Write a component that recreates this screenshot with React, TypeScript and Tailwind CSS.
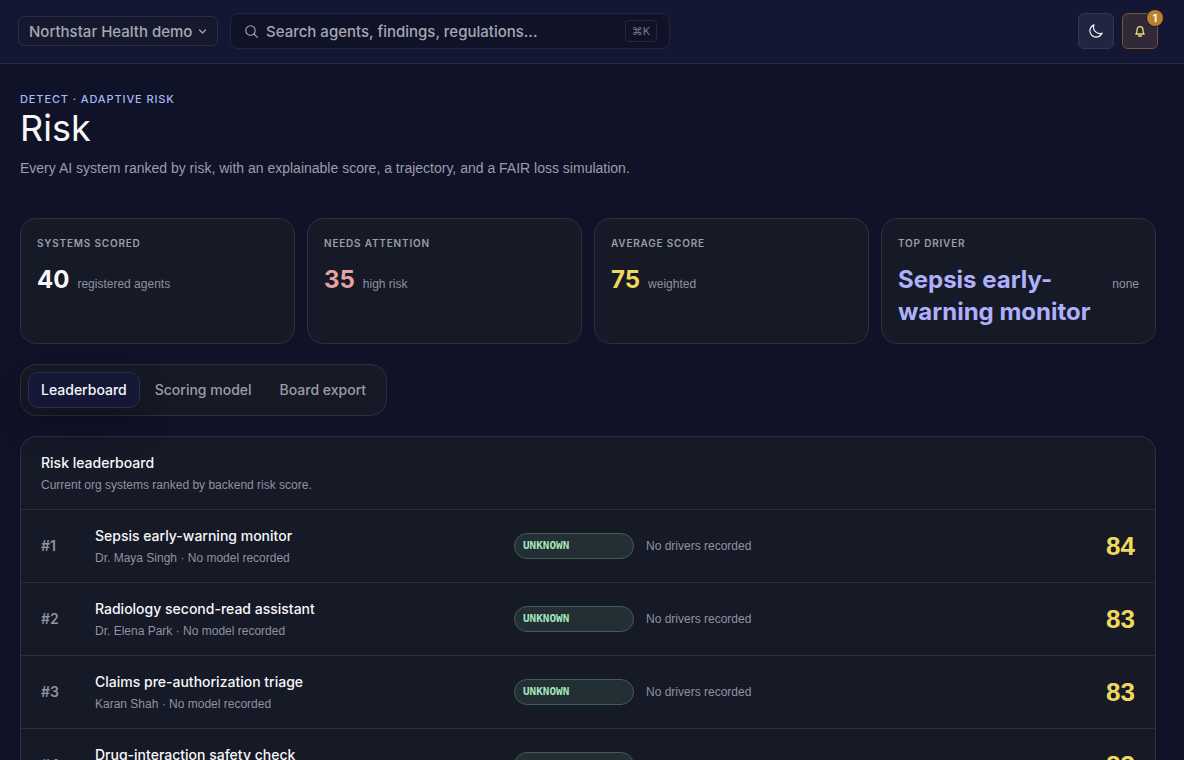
import React, { useState } from 'react';

const stats = [
  { label: 'Systems scored', value: '40', note: 'registered agents', color: 'text-[#f7f7fa]' },
  { label: 'Needs attention', value: '35', note: 'high risk', color: 'text-[#e5a3a3]' },
  { label: 'Average score', value: '75', note: 'weighted', color: 'text-[#efd95b]' },
  { label: 'Top driver', value: 'Sepsis early-warning monitor', note: 'none', color: 'text-[#aeb0fb]' },
];

const tabs = ['Leaderboard', 'Scoring model', 'Board export'];

const systems = [
  { name: 'Sepsis early-warning monitor', owner: 'Dr. Maya Singh', score: 84 },
  { name: 'Radiology second-read assistant', owner: 'Dr. Elena Park', score: 83 },
  { name: 'Claims pre-authorization triage', owner: 'Karan Shah', score: 83 },
  { name: 'Drug-interaction safety check', owner: 'Dr. Maya Singh', score: 83 },
];

const Header: React.FC = () => (
  <header className="flex items-center gap-3 border-b border-[#292c46] bg-[#141733] pt-[13px] pr-[26px] pb-[14px] pl-[18px]">
    <div className="relative shrink-0">
      <select
        aria-label="Organization"
        className="h-[30px] appearance-none rounded-md border border-[#2a2d43] bg-[#16192e] pt-0.5 pr-6 pl-2.5 text-[15px] font-medium text-[#a6a7b1]"
      >
        <option>Northstar Health demo</option>
      </select>
      <svg className="pointer-events-none absolute top-[11px] right-[11px]" width="9" height="9" viewBox="0 0 9 9" fill="none" stroke="#a6a7b1" strokeWidth="1.2" strokeLinecap="round" strokeLinejoin="round">
        <path d="M1.5 3l3 3 3-3" />
      </svg>
    </div>

    <label className="flex h-9 w-[440px] items-center gap-2 rounded-lg border border-[#23263d] bg-[#101228] pr-3 pl-3.5">
      <svg className="shrink-0" width="13" height="13" viewBox="0 0 13 13" fill="none" stroke="#a6a7b1" strokeWidth="1.1" strokeLinecap="round">
        <circle cx="5.5" cy="5.5" r="4.7" />
        <path d="M9 9l3.4 3.4" />
      </svg>
      <input
        type="search"
        aria-label="Search"
        placeholder="Search agents, findings, regulations..."
        className="min-w-0 flex-1 bg-transparent pt-0.5 text-[15px] font-medium text-white outline-none placeholder:text-[#a6a7b1]"
      />
      <kbd className="flex h-[22px] w-8 items-center justify-center rounded border border-[#26293e] font-['Inter','DejaVu_Sans',sans-serif] text-[11px] text-[#777987]">
        ⌘K
      </kbd>
    </label>

    <div className="ml-auto flex gap-2">
      <button aria-label="Toggle theme" className="flex size-9 items-center justify-center rounded-md border border-[#33364f] bg-[#222541]">
        <svg width="14" height="14" viewBox="0 0 14 14" fill="none" stroke="#f0f0f5" strokeWidth="1.2" strokeLinejoin="round">
          <path d="M5 .9a6.3 6.3 0 1 0 8.1 8.1A6.2 6.2 0 0 1 5 .9z" />
        </svg>
      </button>
      <button aria-label="Notifications" className="relative flex size-9 items-center justify-center rounded-md border border-[#7b5530] bg-[#302a38]">
        <svg width="10" height="12" viewBox="0 0 10 12" fill="none" stroke="#f0df80" strokeWidth="1.3" strokeLinejoin="round" strokeLinecap="round">
          <path d="M.9 9c.9-1 1.2-2.1 1.2-4.5a2.9 2.9 0 0 1 5.8 0c0 2.4.3 3.5 1.2 4.5z" />
          <path d="M3.6 11h2.8" />
        </svg>
        <span className="absolute -top-1 -right-1.5 flex size-4 items-center justify-center rounded-full bg-[#bd7f2c] text-[10px] font-bold text-white ring-1 ring-[#141733]">
          1
        </span>
      </button>
    </div>
  </header>
);

const StatCard: React.FC<(typeof stats)[number]> = ({ label, value, note, color }) => (
  <div className="rounded-2xl border border-[#2c2f3c] bg-[#161926] px-4 pt-4 pb-[15px]">
    <p className="text-[10px] leading-4 font-semibold tracking-[0.08em] text-[#9c9da7] uppercase">{label}</p>
    <div className="mt-[13px] flex items-baseline gap-2">
      <span className={`text-2xl leading-8 font-bold ${color}`}>{value}</span>
      <span className="font-['Liberation_Sans',sans-serif] text-xs text-[#9192a0]">{note}</span>
    </div>
  </div>
);

export default function App() {
  const [activeTab, setActiveTab] = useState('Leaderboard');

  return (
    <div className="min-h-screen bg-[#101228] font-['Inter','Liberation_Sans',sans-serif] text-[#f7f7fa]">
      <Header />

      <main className="pt-[27px] pr-7 pb-8 pl-5">
        <p className="text-[11px] leading-4 font-medium tracking-[0.08em] text-[#a5b8f5] uppercase">Detect · Adaptive risk</p>
        <h1 className="mt-px text-4xl leading-10">Risk</h1>
        <p className="mt-2 font-['Liberation_Sans',sans-serif] text-sm leading-6 text-[#9c9da7]">
          Every AI system ranked by risk, with an explainable score, a trajectory, and a FAIR loss simulation.
        </p>

        <section className="mt-[38px] grid grid-cols-4 gap-3">
          {stats.map((stat) => (
            <StatCard key={stat.label} {...stat} />
          ))}
        </section>

        <div role="tablist" className="mt-5 flex w-fit gap-0.5 rounded-2xl border border-[#2c2f3c] bg-[#161926] p-[7px]">
          {tabs.map((tab) => (
            <button
              key={tab}
              role="tab"
              aria-selected={tab === activeTab}
              onClick={() => setActiveTab(tab)}
              className={`h-9 rounded-[10px] border px-3 text-sm font-medium ${
                tab === activeTab
                  ? 'border-[#2a2e4c] bg-[#141735] text-[#f7f7fa] shadow-[0_16px_36px_rgba(0,0,0,0.3)]'
                  : 'border-transparent text-[#9c9da7]'
              }`}
            >
              {tab}
            </button>
          ))}
        </div>

        <section className="mt-5 rounded-2xl border border-[#2c2f3c] bg-[#161926]">
          <div className="px-5 pt-4 pb-[14px]">
            <h2 className="text-sm leading-5 font-medium">Risk leaderboard</h2>
            <p className="mt-0.5 font-['Liberation_Sans',sans-serif] text-xs leading-5 text-[#9192a0]">
              Current org systems ranked by backend risk score.
            </p>
          </div>
          <ol>
            {systems.map((system, i) => (
              <li
                key={system.name}
                className="grid h-[73px] grid-cols-[42px_1fr_120px_1fr_70px] items-center gap-3 border-t border-[#2c2f3c] px-5"
              >
                <span className="text-sm font-semibold text-[#9192a0]">#{i + 1}</span>
                <div className="pt-0.5">
                  <h3 className="text-sm leading-5 font-medium">{system.name}</h3>
                  <p className="mt-0.5 font-['Liberation_Sans',sans-serif] text-xs leading-5 text-[#9192a0]">
                    {system.owner} · No model recorded
                  </p>
                </div>
                <span className="flex h-[26px] items-center rounded-full border border-[#3d6050] bg-[#232e35] px-2 pt-px font-['DejaVu_Sans_Mono',monospace] text-[11px] font-bold text-[#a5e6b9]">
                  UNKNOWN
                </span>
                <span className="font-['Liberation_Sans',sans-serif] text-xs text-[#9192a0]">No drivers recorded</span>
                <span className="text-right font-['Liberation_Sans',sans-serif] text-[26px] font-bold text-[#efd95b]">
                  {system.score}
                </span>
              </li>
            ))}
          </ol>
        </section>
      </main>
    </div>
  );
}
